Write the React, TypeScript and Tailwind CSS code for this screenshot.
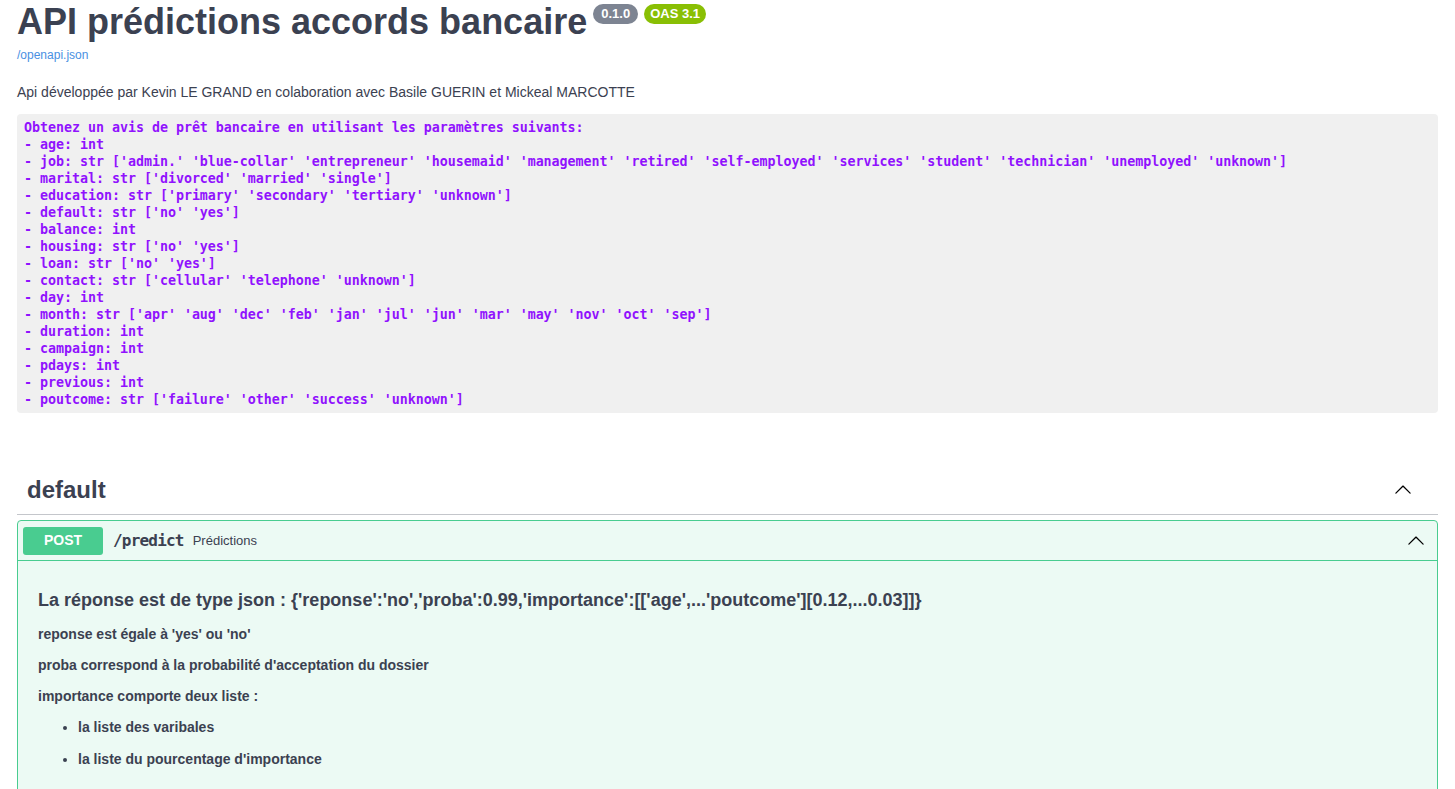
import React from 'react';

const params = [
  "- age: int",
  "- job: str ['admin.' 'blue-collar' 'entrepreneur' 'housemaid' 'management' 'retired' 'self-employed' 'services' 'student' 'technician' 'unemployed' 'unknown']",
  "- marital: str ['divorced' 'married' 'single']",
  "- education: str ['primary' 'secondary' 'tertiary' 'unknown']",
  "- default: str ['no' 'yes']",
  "- balance: int",
  "- housing: str ['no' 'yes']",
  "- loan: str ['no' 'yes']",
  "- contact: str ['cellular' 'telephone' 'unknown']",
  "- day: int",
  "- month: str ['apr' 'aug' 'dec' 'feb' 'jan' 'jul' 'jun' 'mar' 'may' 'nov' 'oct' 'sep']",
  "- duration: int",
  "- campaign: int",
  "- pdays: int",
  "- previous: int",
  "- poutcome: str ['failure' 'other' 'success' 'unknown']",
];

function ArrowUp() {
  return (
    <svg width="18" height="18" viewBox="0 0 20 20" className="text-black">
      <path
        fill="currentColor"
        d="M17.418 13.891c.272.268.709.268.979 0s.271-.701 0-.969l-7.908-7.83c-.27-.268-.707-.268-.979 0l-7.908 7.830c-.27.268-.27.701 0 .969.271.268.709.268.979 0L10 6.75l7.418 7.141z"
      />
    </svg>
  );
}

export default function App() {
  return (
    <div className="min-h-screen bg-white px-[17px] text-[#3b4151] font-['Liberation_Sans',Arial,sans-serif]">
      {/* Info */}
      <div className="flex items-start">
        <h2 className="text-[36px] leading-[44px] font-bold text-[#3b4151]">API prédictions accords bancaire</h2>
        <div className="flex gap-[6px] ml-[6px] mt-[4px]">
          <span className="h-[20px] px-[8px] rounded-full bg-[#7d8492] text-white text-[13px] font-bold leading-[20px]">0.1.0</span>
          <span className="h-[20px] px-[6px] rounded-full bg-[#89bf04] text-white text-[13px] font-bold leading-[20px]">OAS 3.1</span>
        </div>
      </div>
      <a className="block mt-[4px] text-[12px] leading-[15px] text-[#4990e2]">/openapi.json</a>
      <p className="mt-[21px] text-[14px] leading-[17px]">
        Api développée par Kevin LE GRAND en colaboration avec Basile GUERIN et Mickeal MARCOTTE
      </p>
      <pre className="mt-[13px] rounded-[4px] bg-[#f0f0f0] px-[7px] py-[5px] text-[13.33px] leading-[17px] font-semibold text-[#9012fe] font-['DejaVu_Sans_Mono','Liberation_Mono',monospace] tracking-[-0.03px]">
        {"Obtenez un avis de prêt bancaire en utilisant les paramètres suivants:\n" + params.join("\n")}
      </pre>

      {/* Tag section */}
      <div className="mt-[58px]">
        <div className="flex items-center justify-between h-[44px] pl-[10px] pr-[26px] pb-[6px] border-b border-[#c4c6cb]">
          <h3 className="text-[24px] font-bold leading-[28px]">default</h3>
          <ArrowUp />
        </div>
        <div className="mt-[5px] rounded-[4px] border border-[#49cc90] bg-[#ecfaf4]">
          <div className="flex items-center h-[40px] px-[5px] border-b border-[#49cc90]">
            <span className="w-[80px] h-[28px] rounded-[3px] bg-[#49cc90] text-white text-[14px] font-bold flex items-center justify-center">POST</span>
            <span className="ml-[10px] text-[16px] font-bold font-['DejaVu_Sans_Mono','Liberation_Mono',monospace] tracking-[-0.8px]">/predict</span>
            <span className="ml-[9px] text-[13px]">Prédictions</span>
            <span className="ml-auto mr-[7px] flex"><ArrowUp /></span>
          </div>
          <div className="px-[20px] pt-[15px] pb-[40px]">
            <h3 className="mt-[14px] text-[18px] leading-[21px] font-bold">
              La réponse est de type json : {"{'reponse':'no','proba':0.99,'importance':[['age',...'poutcome'][0.12,...0.03]]}"}
            </h3>
            <p className="mt-[15px] text-[14px] leading-[17px] font-bold">reponse est égale à 'yes' ou 'no'</p>
            <p className="mt-[14px] text-[14px] leading-[17px] font-bold">proba correspond à la probabilité d'acceptation du dossier</p>
            <p className="mt-[14px] text-[14px] leading-[17px] font-bold">importance comporte deux liste :</p>
            <ul className="mt-[14px] pl-[40px] list-disc text-[14px] leading-[17px] font-bold">
              <li>la liste des varibales</li>
              <li className="mt-[15px]">la liste du pourcentage d'importance</li>
            </ul>
          </div>
        </div>
      </div>
    </div>
  );
}
